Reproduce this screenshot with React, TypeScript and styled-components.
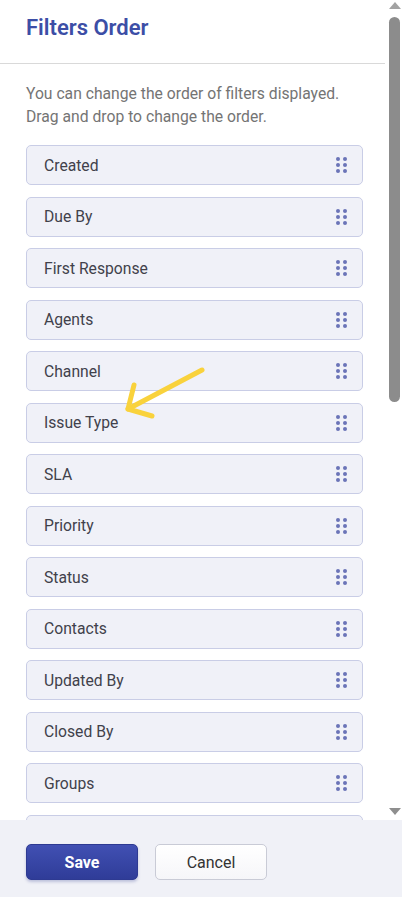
import styled, { createGlobalStyle } from "styled-components";

const GlobalStyle = createGlobalStyle`
  html, body {
    margin: 0;
    padding: 0;
    background: #ffffff;
  }
  body {
    font-family: Roboto, "Noto Sans", Arial, sans-serif;
  }
`;

const Page = styled.div`
  position: relative;
  width: 402px;
  height: 897px;
  display: flex;
  flex-direction: column;
  overflow: hidden;
  background: #ffffff;
`;

const ScrollArea = styled.div`
  height: 820px;
  display: flex;
  flex-direction: row;
`;

const Content = styled.div`
  flex: 1;
  overflow: hidden;
`;

const Header = styled.div`
  height: 64px;
  box-sizing: border-box;
  padding: 15px 26px 0;
  border-bottom: 1px solid #d9d9d9;
  margin-right: 2px;
`;

const Title = styled.h2`
  margin: 0;
  font-size: 22px;
  line-height: 26px;
  font-weight: 600;
  color: #3c4ea6;
`;

const Body = styled.div`
  padding: 18px 24px 0 26px;
`;

const Description = styled.p`
  margin: 0 0 17px;
  font-size: 15.7px;
  line-height: 23px;
  color: #747474;
`;

const List = styled.div`
  display: flex;
  flex-direction: column;
  gap: 11.5px;
`;

const Item = styled.div`
  height: 40px;
  box-sizing: border-box;
  display: flex;
  align-items: center;
  justify-content: space-between;
  padding: 0 15px 0 17px;
  background: #f0f1f8;
  border: 1px solid #c9cde6;
  border-radius: 5px;
  font-size: 15.7px;
  color: #41414b;
  flex-shrink: 0;
`;

const Handle = styled.div`
  display: grid;
  grid-template-columns: 4px 4px;
  grid-auto-rows: 4px;
  column-gap: 3px;
  row-gap: 2px;
`;

const Dot = styled.span`
  width: 4px;
  height: 4px;
  border-radius: 50%;
  background: #6b74b8;
`;

const Track = styled.div`
  width: 15px;
  display: flex;
  flex-direction: column;
  align-items: center;
  background: #ffffff;
`;

const ArrowButton = styled.div<{ $down?: boolean }>`
  height: 15px;
  display: flex;
  align-items: ${(p) => (p.$down ? "flex-start" : "flex-end")};
  justify-content: center;
  padding: ${(p) => (p.$down ? "3px 0 0" : "0 0 6px")};
  box-sizing: border-box;
`;

const Triangle = styled.span<{ $down?: boolean }>`
  width: 0;
  height: 0;
  border-left: 6px solid transparent;
  border-right: 6px solid transparent;
  ${(p) =>
    p.$down
      ? "border-top: 7px solid #8e8e8e;"
      : "border-bottom: 7px solid #a3a3a3;"}
`;

const Thumb = styled.div`
  margin-top: 2px;
  width: 11px;
  height: 385px;
  border-radius: 6px;
  background: #8c8c8c;
`;

const Spacer = styled.div`
  flex: 1;
`;

const Footer = styled.div`
  flex: 1;
  background: #f0f1f7;
  display: flex;
  align-items: flex-start;
  gap: 17px;
  padding: 24px 26px 0;
  box-sizing: border-box;
`;

const Button = styled.button<{ $primary?: boolean }>`
  width: 112px;
  height: 36px;
  border-radius: 5px;
  font-family: Roboto, "Noto Sans", Arial, sans-serif;
  font-size: 16px;
  cursor: pointer;
  ${(p) =>
    p.$primary
      ? `
    background: linear-gradient(#4150b3, #2f3c98);
    color: #ffffff;
    font-weight: 700;
    border: 1px solid #2e3a92;
    box-shadow: 0 2px 3px rgba(40, 50, 140, 0.25);
  `
      : `
    background: linear-gradient(#ffffff, #f6f6f9);
    color: #333333;
    font-weight: 400;
    border: 1px solid #c9cbd6;
  `}
`;

const Annotation = styled.svg`
  position: absolute;
  left: 0;
  top: 0;
  pointer-events: none;
`;

const filters = [
  "Created",
  "Due By",
  "First Response",
  "Agents",
  "Channel",
  "Issue Type",
  "SLA",
  "Priority",
  "Status",
  "Contacts",
  "Updated By",
  "Closed By",
  "Groups",
  "",
];

function DragHandle() {
  return (
    <Handle>
      {Array.from({ length: 6 }).map((_, i) => (
        <Dot key={i} />
      ))}
    </Handle>
  );
}

export default function App() {
  return (
    <>
      <GlobalStyle />
      <Page>
        <ScrollArea>
          <Content>
            <Header>
              <Title>Filters Order</Title>
            </Header>
            <Body>
              <Description>
                You can change the order of filters displayed.
                <br />
                Drag and drop to change the order.
              </Description>
              <List>
                {filters.map((f, i) => (
                  <Item key={i}>
                    <span>{f}</span>
                    <DragHandle />
                  </Item>
                ))}
              </List>
            </Body>
          </Content>
          <Track>
            <ArrowButton>
              <Triangle />
            </ArrowButton>
            <Thumb />
            <Spacer />
            <ArrowButton $down>
              <Triangle $down />
            </ArrowButton>
          </Track>
        </ScrollArea>
        <Footer>
          <Button $primary>Save</Button>
          <Button>Cancel</Button>
        </Footer>
        <Annotation width="402" height="897" viewBox="0 0 402 897">
          <g
            stroke="#f9d23c"
            strokeWidth="5"
            strokeLinecap="round"
            strokeLinejoin="round"
            fill="none"
          >
            <path d="M202 370 L128 409" />
            <path d="M134 385 L128 409 L152 416" />
          </g>
        </Annotation>
      </Page>
    </>
  );
}
